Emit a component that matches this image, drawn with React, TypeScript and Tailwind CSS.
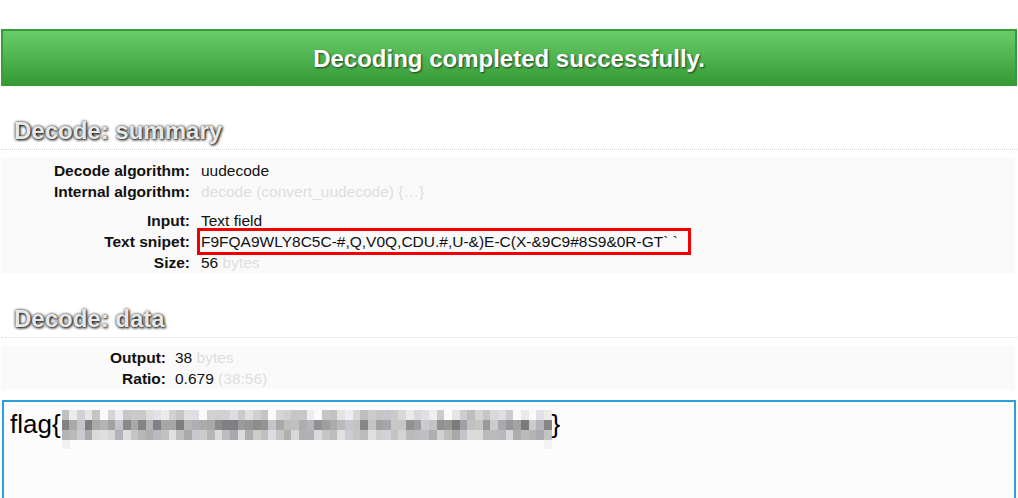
import React from "react";

// pseudo random greys for the blurred part of the flag
function mosaic(cols: number, rows: number) {
  let seed = 1337;
  const rnd = () => {
    seed = (seed * 1103515245 + 12345) % 2147483648;
    return seed / 2147483648;
  };
  const base = [[214, 24], [162, 44], [196, 30]];
  const out: number[][] = [];
  for (let r = 0; r < rows; r++) {
    const row: number[] = [];
    for (let c = 0; c < cols; c++) {
      const [b, spread] = base[r];
      let v = Math.round(b + (rnd() - 0.5) * 2 * spread);
      if (r === 0 && rnd() < 0.12) v = 250;
      row.push(Math.min(250, Math.max(120, v)));
    }
    out.push(row);
  }
  return out;
}

const cells = mosaic(64, 3);

function Heading({ children }: { children: React.ReactNode }) {
  return (
    <div className="mx-px pl-[13px] pb-[4px] border-b border-dotted border-[#d6d6d6]">
      <h2 className="text-[24px] leading-[28px] font-bold text-[#e8e8e8] [text-shadow:1px_1px_3px_#000,0_0_3px_#444]">
        {children}
      </h2>
    </div>
  );
}

function Row({ label, children }: { label: string; children: React.ReactNode }) {
  return (
    <>
      <div className="text-right font-bold">{label}</div>
      <div className="relative">{children}</div>
    </>
  );
}

export default function App() {
  return (
    <div className="w-[1018px] h-[498px] overflow-hidden bg-white font-['Liberation_Sans',Arial,sans-serif] text-[#111]">
      <div className="pt-[29px]">
        <div className="mx-px h-[57px] border-t-2 border-x-2 border-[#3a9b3a] bg-gradient-to-b from-[#68cd68] to-[#339933] flex items-center justify-center">
          <span className="text-[24px] font-bold text-white [text-shadow:1px_1px_2px_#1f3f1f]">
            Decoding completed successfully.
          </span>
        </div>
      </div>

      <div className="pt-[31px]">
        <Heading>Decode: summary</Heading>
      </div>

      <div className="mx-px mt-[7px] w-[1014px] bg-[#fafafa] pt-[3px] text-[15.5px] leading-[21px]">
        <div className="grid grid-cols-[189px_1fr] gap-x-[11px]">
          <Row label="Decode algorithm:">uudecode</Row>
          <Row label="Internal algorithm:">
            <span className="text-[#dedede]">decode (convert_uudecode) {"{…}"}</span>
          </Row>
        </div>
        <div className="grid grid-cols-[189px_1fr] gap-x-[11px] mt-[8px]">
          <Row label="Input:">Text field</Row>
          <Row label="Text snipet:">
            F9FQA9WLY8C5C-#,Q,V0Q,CDU.#,U-&amp;)E-C(X-&amp;9C9#8S9&amp;0R-GT` `
            <div className="absolute -left-[4px] -top-[3px] w-[494px] h-[27px] border-[3px] border-[#f00000]" />
          </Row>
          <Row label="Size:">
            56 <span className="text-[#dedede]">bytes</span>
          </Row>
        </div>
      </div>

      <div className="pt-[32px]">
        <Heading>Decode: data</Heading>
      </div>

      <div className="mx-px mt-[8px] w-[1014px] bg-[#fafafa] pt-px text-[15.5px] leading-[21px]">
        <div className="grid grid-cols-[165px_1fr] gap-x-[9px]">
          <Row label="Output:">
            38 <span className="text-[#dedede]">bytes</span>
          </Row>
          <Row label="Ratio:">
            0.679 <span className="text-[#dedede]">(38:56)</span>
          </Row>
        </div>
      </div>

      <div className="ml-[2px] mt-[11px] w-[1014px] h-[110px] border-2 border-[#2b9fdc] bg-[#fcfcfc] pl-[6px] pt-[7px]">
        <div className="flex items-start text-[26px] leading-[30px] text-black">
          <span>flag{"{"}</span>
          <div className="ml-px mt-[1px] w-[490px] flex flex-col">
            {cells.map((row, r) => (
              <div key={r} className="flex h-[10px]">
                {row.map((v, c) => (
                  <div
                    key={c}
                    className="flex-1"
                    style={{ backgroundColor: `rgb(${v},${v},${v + (c % 5 === 2 ? 6 : 0)})` }}
                  />
                ))}
              </div>
            ))}
            <div className="flex h-[9px] justify-between">
              <div className="w-[8px] bg-[#f1f1f3]" />
              <div className="w-[8px] bg-[#f4f4f4]" />
            </div>
          </div>
          <span>{"}"}</span>
        </div>
      </div>
    </div>
  );
}
